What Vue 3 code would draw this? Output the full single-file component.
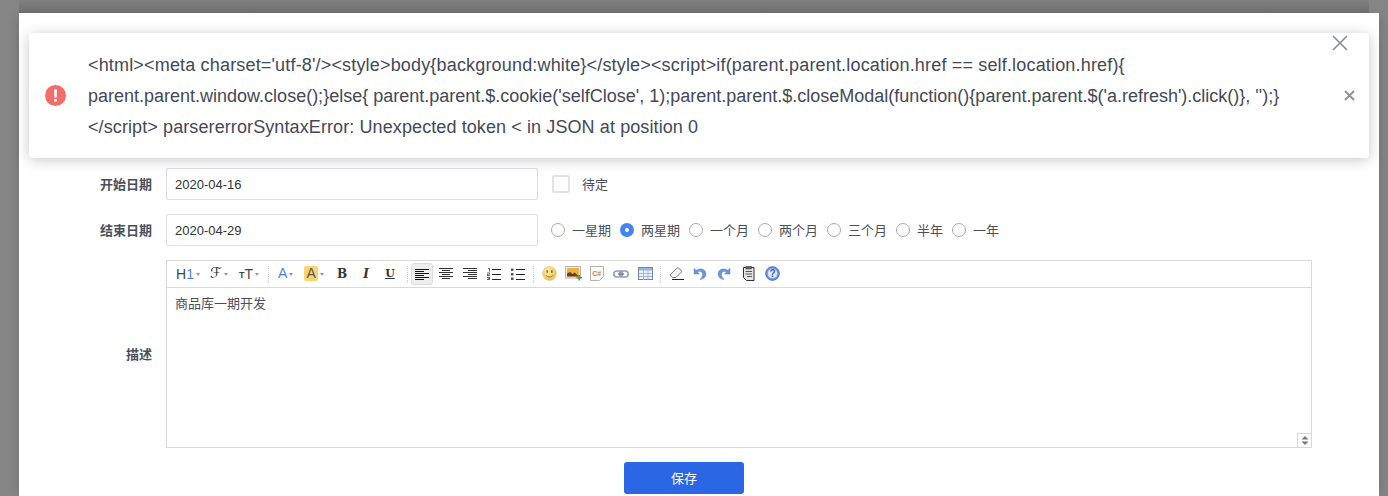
<script setup>
const periods = [
  { label: '一星期', on: false },
  { label: '两星期', on: true },
  { label: '一个月', on: false },
  { label: '两个月', on: false },
  { label: '三个月', on: false },
  { label: '半年', on: false },
  { label: '一年', on: false }
]
</script>

<template>
  <div class="page">
    <div class="backdrop-band"></div>
    <div class="modal">
      <form class="form" @submit.prevent>
        <div class="row">
          <label class="label">开始日期</label>
          <input class="date" value="2020-04-16" />
          <span class="box"></span>
          <span class="opt first">待定</span>
        </div>
        <div class="row">
          <label class="label">结束日期</label>
          <input class="date" value="2020-04-29" />
          <div class="radios">
            <span v-for="p in periods" :key="p.label" class="radio-item">
              <span class="radio" :class="{ on: p.on }"></span>
              <span class="opt">{{ p.label }}</span>
            </span>
          </div>
        </div>
        <div class="row editor-row">
          <label class="label">描述</label>
          <div class="editor">
            <div class="toolbar">
              <span class="tool t-h"><span class="h">H</span><span class="one">1</span><i class="caret"></i></span>
              <span class="tool t-f"><span class="f">ℱ</span><i class="caret"></i></span>
              <span class="tool t-t"><span class="tsm">T</span><span class="tbg">T</span><i class="caret"></i></span>
              <span class="sep sep-a"></span>
              <span class="tool t-a"><span class="a blue">A</span><i class="caret"></i></span>
              <span class="tool t-b"><span class="a hl">A</span><i class="caret"></i></span>
              <span class="tool t-s"><b class="serif">B</b></span>
              <span class="tool t-s"><b class="serif it">I</b></span>
              <span class="tool t-s"><b class="serif ul">U</b></span>
              <span class="sep sep-b"></span>
              <span class="tool t-s active">
                <svg width="14" height="11" viewBox="0 0 14 11"><path d="M0 .5h14M0 2.500h9M0 4.500h14M0 6.500h9M0 8.500h14M0 10.500h9" stroke="#111" fill="none"/></svg>
              </span>
              <span class="tool t-s">
                <svg width="14" height="11" viewBox="0 0 14 11"><path d="M0 .5h14M3 2.500h8M0 4.500h14M3 6.500h8M0 8.500h14M3 10.500h8" stroke="#333" fill="none"/></svg>
              </span>
              <span class="tool t-s">
                <svg width="14" height="11" viewBox="0 0 14 11"><path d="M0 .5h14M5 2.500h9M0 4.500h14M5 6.500h9M0 8.500h14M5 10.500h9" stroke="#333" fill="none"/></svg>
              </span>
              <span class="tool t-s">
                <svg width="14" height="12" viewBox="0 0 14 12"><path d="M5 1.500h9M5 6.500h9M5 11.500h9" stroke="#222" fill="none"/><path d="M1 0h2v3.500H2V1H1zM0 4.500h3v2H1v.5h2v1H0v-2h2V5.500H0zM0 9h3v3H0v-1h2v-.300H1v-.700h1V10H0z" fill="#666"/></svg>
              </span>
              <span class="tool t-s">
                <svg width="14" height="12" viewBox="0 0 14 12"><path d="M5 1.500h9M5 6.500h9M5 11.500h9" stroke="#222" fill="none"/><path d="M0 .500h2.500v2.500H0zM0 5h2.500v2.500H0zM0 9.500h2.500V12H0z" fill="#555"/></svg>
              </span>
              <span class="sep sep-c"></span>
              <span class="tool t-s">
                <svg width="15" height="15" viewBox="0 0 15 15">
                  <defs>
                    <radialGradient id="smile" cx="0.4" cy="0.35" r="0.75"><stop offset="0" stop-color="#fdf0a8"/><stop offset="1" stop-color="#e9b94d"/></radialGradient>
                  </defs>
                  <circle cx="7.500" cy="7.500" r="7" fill="url(#smile)" stroke="#e6c98a" stroke-width=".6"/>
                  <rect x="4.500" y="4.300" width="1.300" height="2.500" fill="#6b4f1a"/>
                  <rect x="9.200" y="4.300" width="1.300" height="2.500" fill="#6b4f1a"/>
                  <path d="M3.800 9.200c1.500 2.300 5.900 2.300 7.400 0" stroke="#9a7428" fill="none"/>
                </svg>
              </span>
              <span class="tool t-s">
                <svg width="17" height="15" viewBox="0 0 17 15">
                  <rect x=".5" y=".5" width="15" height="11.500" fill="#efefef" stroke="#b5b5b5"/>
                  <rect x="2" y="2" width="12" height="8.500" fill="#f3b03c"/>
                  <path d="M2 10.500V7.500l3-1.500 2.500 2 2-1.500 4.500 4z" fill="#5b4524"/>
                  <path d="M11.500 11h2V9h1.500v2h2v1.500h-2v2h-1.500v-2h-2z" fill="#4f9a45"/>
                </svg>
              </span>
              <span class="tool t-s">
                <svg width="14" height="15" viewBox="0 0 14 15"><path d="M.5.5h13v10l-4 4h-9z" fill="#f9f9f5" stroke="#b3b3b3"/><text x="2.200" y="9.500" class="csharp">C#</text></svg>
              </span>
              <span class="tool t-s">
                <svg width="16" height="8" viewBox="0 0 16 8"><rect x=".8" y="1" width="8.500" height="6" rx="3" fill="none" stroke="#8f9bb5" stroke-width="1.500"/><rect x="6.700" y="1" width="8.500" height="6" rx="3" fill="none" stroke="#8f9bb5" stroke-width="1.500"/><path d="M5 4h6" stroke="#6a7690" stroke-width="1.300"/></svg>
              </span>
              <span class="tool t-s">
                <svg width="15" height="13" viewBox="0 0 15 13"><rect x=".5" y=".5" width="14" height="12" fill="#edf2fa" stroke="#6f87ae"/><path d="M1 1h13v2.500H1z" fill="#9ab2d8"/><path d="M1 6.500h13M1 9.500h13M5.500 3.500V12.500M10 3.500V12.500" stroke="#a3b6d4" fill="none"/></svg>
              </span>
              <span class="sep sep-d"></span>
              <span class="tool t-s">
                <svg width="15" height="13" viewBox="0 0 15 13"><path d="M.8 8L7.800 1.200c.5-.5 1.200-.5 1.700 0l2.800 2.300c.5.5.5 1.200 0 1.700L7 10.500H3.500z" fill="#f4f4f4" stroke="#777"/><path d="M3 12.500h12" stroke="#222"/></svg>
              </span>
              <span class="tool t-s">
                <svg width="14" height="14" viewBox="0 0 14 14"><path d="M1 1.500v5.500h5.500L4.500 5c2-1.500 5-.5 5 2.500 0 2-1 3.500-2.500 5 4-.5 6-3 6-5.500C13 2.500 7.500.5 3.300 3.200z" fill="#6d94d8" stroke="#5a80c4" stroke-width=".5"/></svg>
              </span>
              <span class="tool t-s">
                <svg width="14" height="14" viewBox="0 0 14 14"><g transform="matrix(-1 0 0 1 14 0)"><path d="M1 1.500v5.500h5.500L4.500 5c2-1.500 5-.5 5 2.500 0 2-1 3.500-2.500 5 4-.5 6-3 6-5.500C13 2.500 7.500.5 3.300 3.200z" fill="#6d94d8" stroke="#5a80c4" stroke-width=".5"/></g></svg>
              </span>
              <span class="tool t-s">
                <svg width="13" height="15" viewBox="0 0 13 15"><path d="M1.500 1.500h10.500v13H4.500l-3-3z" fill="#e6e6e2" stroke="#333"/><rect x="4" y=".5" width="5.500" height="2.500" fill="#666" stroke="#333" stroke-width=".5"/><path d="M3.500 5.500h6.500M3.500 8h6.500M5 10.500h5" stroke="#555" fill="none"/></svg>
              </span>
              <span class="tool t-s">
                <svg width="15" height="15" viewBox="0 0 15 15"><circle cx="7.500" cy="7.500" r="6.800" fill="#7397df" stroke="#4469b8"/><circle cx="7.500" cy="7.500" r="4.800" fill="#dce6f8"/><text x="7.500" y="11.200" class="q">?</text></svg>
              </span>
            </div>
            <div class="content">商品库一期开发</div>
            <span class="resize">
              <svg width="8" height="9" viewBox="0 0 8 9"><path d="M4 0l3.500 3.500h-7zM4 9L.5 5.500h7z" fill="#777"/></svg>
            </span>
          </div>
        </div>
        <div class="actions">
          <button class="save" type="button"><span class="save-text">保存</span></button>
        </div>
      </form>
    </div>

    <div class="alert">
      <svg class="alert-icon" width="21" height="21" viewBox="0 0 21 21">
        <circle cx="10.500" cy="10.500" r="10.500" fill="#f56c6c"/>
        <path d="M9 4.500h3l-.4 8h-2.200z" fill="#fff"/>
        <circle cx="10.500" cy="15.300" r="1.500" fill="#fff"/>
      </svg>
      <p class="alert-text">
        <span class="line l1">&lt;html&gt;&lt;meta charset='utf-8'/&gt;&lt;style&gt;body{background:white}&lt;/style&gt;&lt;script&gt;if(parent.parent.location.href == self.location.href){</span>
        <span class="line">parent.parent.window.close();}else{ parent.parent.$.cookie('selfClose', 1);parent.parent.$.closeModal(function(){parent.parent.$('a.refresh').click()}, '');}</span>
        <span class="line l3">&lt;/script&gt; parsererrorSyntaxError: Unexpected token &lt; in JSON at position 0</span>
      </p>
      <svg class="alert-close" width="11" height="11" viewBox="0 0 11 11"><path d="M1 1l9 9M10 1l-9 9" stroke="#8e93a4" stroke-width="2" fill="none"/></svg>
    </div>

    <svg class="modal-close" width="16" height="16" viewBox="0 0 16 16"><path d="M1 1l14 14M15 1L1 15" stroke="#848a9b" stroke-width="1.500" fill="none"/></svg>
  </div>
</template>

<style scoped>
.page {
  position: relative;
  width: 1388px;
  height: 496px;
  overflow: hidden;
  background: #858585;
  padding: 13px 9px 0 19px;
  box-sizing: border-box;
  font-family: "Liberation Sans", "Noto Sans CJK SC", sans-serif;
}
.backdrop-band {
  position: absolute;
  left: 19px;
  top: 0;
  width: 1350px;
  height: 13px;
  background: linear-gradient(#808080, #6f6f6f);
}
.modal {
  position: relative;
  width: 1360px;
  height: 483px;
  background: #fff;
  padding-top: 155px;
  box-sizing: border-box;
  box-shadow: -6px 0 8px -4px rgba(0, 0, 0, 0.12), 6px 0 8px -4px rgba(0, 0, 0, 0.12);
}
.form {
  display: flex;
  flex-direction: column;
  gap: 14px;
}
.row {
  display: flex;
  align-items: center;
  height: 32px;
  font-size: 13px;
  color: #4a4f5c;
}
.label {
  width: 133px;
  text-align: right;
  margin-right: 14px;
  margin-bottom: 2px;
  font-weight: 700;
  font-size: 13px;
  color: #4a4f5c;
  flex: none;
}
.date {
  width: 372px;
  height: 32px;
  box-sizing: border-box;
  border: 1px solid #dcdfe6;
  border-radius: 2px;
  padding: 0 8px;
  font: 13px "Liberation Sans", sans-serif;
  color: #333;
  outline: none;
}
.box {
  width: 18px;
  height: 18px;
  box-sizing: border-box;
  border: 2px solid #e3e3e3;
  border-radius: 2px;
  margin-left: 14px;
}
.opt {
  font-size: 13px;
  color: #4a4f5c;
  white-space: nowrap;
  margin-bottom: 2px;
}
.opt.first {
  margin-left: 12px;
}
.radios {
  display: flex;
  align-items: center;
  margin-left: 13px;
  gap: 9px;
}
.radio-item {
  display: flex;
  align-items: center;
  gap: 7px;
}
.radio {
  width: 14px;
  height: 14px;
  box-sizing: border-box;
  border: 1px solid #aaa;
  border-radius: 50%;
  background: #fff;
}
.radio.on {
  border: 5px solid #4684f4;
}
.editor-row {
  height: 188px;
}
.editor {
  position: relative;
  width: 1146px;
  height: 188px;
  box-sizing: border-box;
  border: 1px solid #d9d9d9;
  display: flex;
  flex-direction: column;
}
.toolbar {
  height: 26px;
  flex: none;
  border-bottom: 1px solid #d9d9d9;
  display: flex;
  align-items: center;
  padding-left: 9px;
}
.tool {
  display: inline-flex;
  align-items: center;
  justify-content: flex-start;
  height: 20px;
  color: #333;
  flex: none;
  box-sizing: border-box;
  padding-bottom: 1px;
}
.t-h { width: 30px; font-size: 14px; }
.t-f { width: 30px; padding-left: 4px; }
.t-t { width: 28px; padding-left: 3px; }
.t-a { width: 30px; padding-left: 9px; }
.t-b { width: 31px; padding-left: 5px; }
.t-s { width: 24px; justify-content: center; }
.t-s.active {
  width: 22px;
  height: 22px;
  margin: 0 1px;
  padding-bottom: 0;
  background: #eee;
  border: 1px solid #ddd;
  border-radius: 3px;
}
.h { color: #444; }
.one { color: #4684f4; }
.f {
  font: italic 15px "DejaVu Sans", sans-serif;
  color: #333;
  line-height: 15px;
}
.tsm { font-size: 9px; color: #444; margin-top: 3px; font-weight: 700; }
.tbg { font-size: 14px; color: #444; }
.a { font-size: 14px; line-height: 15px; }
.blue { color: #4684f4; }
.hl {
  background: #fbd66e;
  color: #555;
  border-radius: 2px;
  padding: 0 2.5px;
}
.caret {
  width: 0;
  height: 0;
  margin-left: 2px;
  margin-top: 1px;
  border-left: 2.5px solid transparent;
  border-right: 2.5px solid transparent;
  border-top: 3px solid #999;
}
.serif {
  font: 700 12px "DejaVu Serif", "Liberation Serif", serif;
  color: #333;
}
.it { font-style: italic; }
.ul { text-decoration: underline; font-size: 11px; }
.sep {
  width: 0;
  height: 17px;
  border-left: 1px dotted #ccc;
  flex: none;
}
.sep-a { margin: 0 0 0 4px; }
.sep-b { margin: 0 2px 0 5px; }
.sep-c { margin: 0 3px; }
.sep-d { margin: 0 3px; }
.csharp {
  font: 700 7px "Liberation Sans", sans-serif;
  fill: #b08a50;
}
.q {
  font: 700 10px "Liberation Sans", sans-serif;
  fill: #3f63b0;
  text-anchor: middle;
}
.content {
  flex: 1;
  padding: 8px;
  font-size: 13px;
  line-height: 16px;
  color: #4a4f5c;
}
.resize {
  position: absolute;
  right: 0;
  bottom: 0;
  width: 14px;
  height: 14px;
  box-sizing: border-box;
  border: 1px solid #d9d9d9;
  border-right: 0;
  border-bottom: 0;
  display: flex;
  align-items: center;
  justify-content: center;
}
.actions {
  display: flex;
  justify-content: center;
  padding-right: 30px;
}
.save {
  width: 120px;
  height: 32px;
  border: 0;
  border-radius: 3px;
  background: #2b67e5;
  color: #fff;
  padding: 0;
  font: 13px "Liberation Sans", "Noto Sans CJK SC", sans-serif;
}
.save-text {
  display: block;
  margin-bottom: 2px;
}
.alert {
  position: absolute;
  left: 29px;
  top: 33px;
  width: 1340px;
  height: 125px;
  box-sizing: border-box;
  background: #fff;
  border-radius: 4px;
  box-shadow: 0 2px 14px rgba(0, 0, 0, 0.22);
  display: flex;
  align-items: center;
  padding: 0 14px 0 16px;
}
.alert-icon {
  flex: none;
  margin-right: 22px;
}
.alert-text {
  flex: 1;
  margin: 0;
  padding-top: 2px;
  font-size: 18px;
  line-height: 31px;
  color: #434958;
  padding-right: 14px;
}
.line {
  display: block;
  white-space: nowrap;
}
.l1 {
  letter-spacing: 0.17px;
}
.l3 {
  letter-spacing: 0.1px;
}
.alert-close {
  flex: none;
}
.modal-close {
  position: absolute;
  left: 1332px;
  top: 35px;
}
</style>
